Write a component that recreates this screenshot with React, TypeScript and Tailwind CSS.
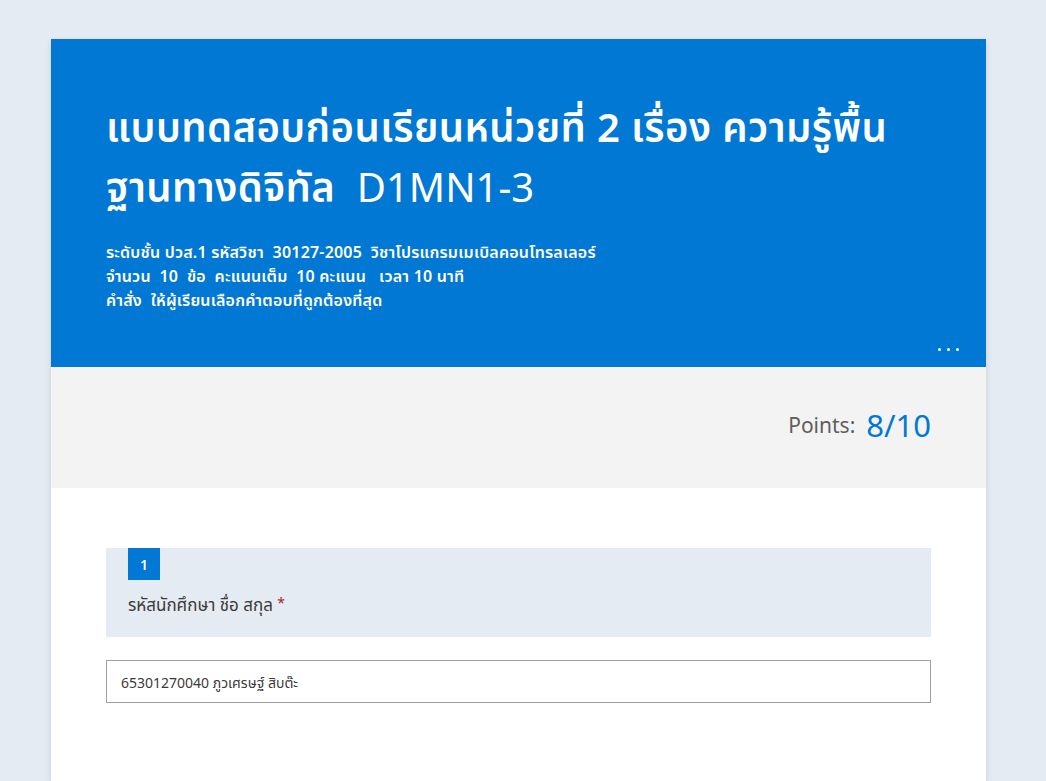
export default function App() {
  const font = { fontFamily: '"Segoe UI", "Noto Sans", "Noto Sans Thai", "Liberation Sans", sans-serif' }
  return (
    <div className="min-h-[781px] bg-[#e5ebf3] px-[51px] pt-[39px] overflow-hidden" style={font}>
      <div className="w-[935px] bg-white shadow-[0_2px_6px_rgba(0,0,0,0.12)]">
        {/* header */}
        <div className="relative h-[328px] bg-[#0078d4] px-[55px] pt-[58px] text-white">
          <h1 className="text-[40px] leading-[60px] font-semibold tracking-[0.4px]">
            แบบทดสอบก่อนเรียนหน่วยที่ 2 เรื่อง ความรู้พื้น
            <br />
            ฐานทางดิจิทัล&nbsp; <span className="font-normal tracking-normal">D1MN1-3</span>
          </h1>
          <div className="mt-[23px] text-[16px] leading-[24px] font-semibold tracking-[0.2px]">
            <div>ระดับชั้น ปวส.1 รหัสวิชา&nbsp; 30127-2005&nbsp; วิชาโปรแกรมเมเบิลคอนโทรลเลอร์</div>
            <div>จำนวน&nbsp; 10&nbsp; ข้อ&nbsp; คะแนนเต็ม&nbsp; 10 คะแนน&nbsp;&nbsp; เวลา 10 นาที</div>
            <div>คำสั่ง&nbsp; ให้ผู้เรียนเลือกคำตอบที่ถูกต้องที่สุด</div>
          </div>
          <div className="absolute right-[27px] bottom-[16px] flex gap-[6px]">
            <span className="h-[3px] w-[3px] rounded-full bg-white" />
            <span className="h-[3px] w-[3px] rounded-full bg-white" />
            <span className="h-[3px] w-[3px] rounded-full bg-white" />
          </div>
        </div>

        {/* points */}
        <div className="flex h-[121px] items-center justify-end bg-[#f3f3f3] px-[55px] pb-[4px]">
          <span className="text-[21px] text-[#605e5c]">Points:</span>
          <span className="ml-[11px] text-[31px] text-[#0078d4]">8/10</span>
        </div>

        {/* body */}
        <div className="px-[55px] pt-[60px] pb-[80px]">
          <div className="h-[89px] bg-[#e5ebf3] px-[22px]">
            <div className="flex h-[32px] w-[32px] items-center justify-center bg-[#0078d4] text-[14px] font-semibold text-white">1</div>
            <div className="mt-[12px] text-[17px] text-[#3b3a39]">
              รหัสนักศึกษา ชื่อ สกุล <span className="align-top text-[14px] text-[#a4262c]">*</span>
            </div>
          </div>
          <div className="mt-[23px] flex h-[43px] items-center border border-[#a19f9d] px-[14px] pt-[2px] text-[14px] text-[#3b3a39]">
            65301270040 ภูวเศรษฐ์ สิบต๊ะ
          </div>
        </div>
      </div>
    </div>
  )
}
